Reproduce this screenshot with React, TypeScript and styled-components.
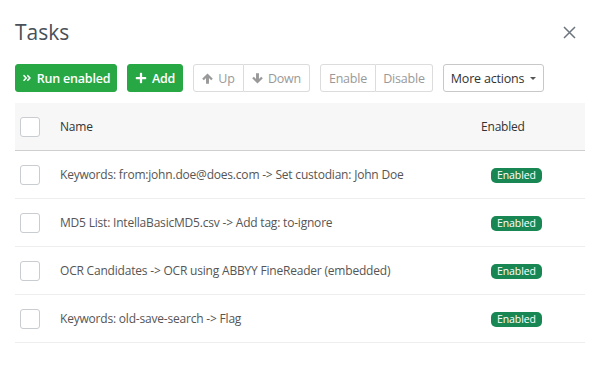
import styled, { createGlobalStyle } from "styled-components";
import { FaAngleDoubleRight, FaPlus } from "react-icons/fa";

const GlobalStyle = createGlobalStyle`
  body {
    margin: 0;
    background: #fff;
    font-family: "Open Sans", "Noto Sans", sans-serif;
    color: #333;
  }
`;

const Dialog = styled.div`
  width: 597px;
  height: 392px;
  box-sizing: border-box;
  padding: 14px 12px 0 15px;
`;

const TitleBar = styled.div`
  display: flex;
  align-items: center;
  justify-content: space-between;
  height: 36px;
`;

const Title = styled.h1`
  margin: 0;
  font-size: 21px;
  font-weight: 400;
  color: #495057;
`;

const Close = styled.button`
  border: 0;
  background: none;
  padding: 0;
  margin-right: 8px;
  width: 16px;
  height: 16px;
  display: flex;
  align-items: center;
  justify-content: center;
  color: #6c757d;
`;

const Toolbar = styled.div`
  display: flex;
  align-items: center;
  gap: 10px;
  margin-top: 14px;
`;

const Btn = styled.button<{ $variant?: "success" | "outline" | "disabled"; $w: number }>`
  width: ${(p) => p.$w}px;
  height: 28px;
  box-sizing: border-box;
  display: flex;
  align-items: center;
  justify-content: center;
  gap: 5px;
  padding: 0;
  white-space: nowrap;
  font-family: inherit;
  font-size: 12.5px;
  letter-spacing: -0.2px;
  border-radius: 3px;
  border: 1px solid
    ${(p) =>
      p.$variant === "success" ? "#28a745" : p.$variant === "outline" ? "#c8c8c8" : "#dcdcdc"};
  background: ${(p) => (p.$variant === "success" ? "#28a745" : "#fff")};
  color: ${(p) =>
    p.$variant === "success" ? "#fff" : p.$variant === "outline" ? "#333" : "#999"};
  font-weight: ${(p) => (p.$variant === "success" ? 600 : 400)};
`;

const Group = styled.div`
  display: flex;
  ${Btn} {
    border-radius: 0;
  }
  ${Btn}:first-child {
    border-radius: 3px 0 0 3px;
  }
  ${Btn}:last-child {
    border-radius: 0 3px 3px 0;
    border-left: 0;
  }
`;

const Caret = styled.span`
  display: inline-block;
  border-left: 3px solid transparent;
  border-right: 3px solid transparent;
  border-top: 3px solid #555;
  margin-left: 1px;
`;

const Table = styled.div`
  margin-top: 11px;
  width: 570px;
  font-size: 12px;
  letter-spacing: -0.2px;
`;

const Row = styled.div<{ $head?: boolean }>`
  display: grid;
  grid-template-columns: 45px 1fr 110px;
  align-items: center;
  height: 47px;
  white-space: nowrap;
  background: ${(p) => (p.$head ? "#f7f7f7" : "#fff")};
  border-bottom: 1px solid ${(p) => (p.$head ? "#cfcfcf" : "#eeeeee")};
  color: ${(p) => (p.$head ? "#333" : "#555")};
`;

const Check = styled.span`
  width: 18px;
  height: 18px;
  margin-left: 5px;
  border: 1px solid #c9ccd0;
  border-radius: 3px;
  background: #fff;
`;

const EnabledHead = styled.div`
  padding-left: 6px;
  color: #333;
`;

const BadgeCell = styled.div`
  padding-left: 16px;
`;

const Badge = styled.span`
  display: inline-block;
  background: #198754;
  color: #fff;
  font-size: 10.5px;
  letter-spacing: -0.1px;
  line-height: 15px;
  padding: 0 6px;
  border-radius: 5px;
`;

// solid arrow, pointing up; flipped for down
const Arrow = ({ down }: { down?: boolean }) => (
  <svg
    width="11"
    height="11"
    viewBox="0 0 12 12"
    style={down ? { transform: "rotate(180deg)" } : undefined}
  >
    <path
      d="M6 0.5 L11.8 6.2 L10 7.9 L7.6 5.5 V11.8 H4.4 V5.5 L2 7.9 L0.2 6.2 Z"
      fill="currentColor"
    />
  </svg>
);

const tasks = [
  "Keywords: from:john.doe@does.com -> Set custodian: John Doe",
  "MD5 List: IntellaBasicMD5.csv -> Add tag: to-ignore",
  "OCR Candidates -> OCR using ABBYY FineReader (embedded)",
  "Keywords: old-save-search -> Flag",
];

export default function App() {
  return (
    <>
      <GlobalStyle />
      <Dialog>
        <TitleBar>
          <Title>Tasks</Title>
          <Close aria-label="close">
            <svg width="13" height="13" viewBox="0 0 13 13">
              <path d="M1 1L12 12M12 1L1 12" stroke="currentColor" strokeWidth="1.5" />
            </svg>
          </Close>
        </TitleBar>
        <Toolbar>
          <Btn $variant="success" $w={102}>
            <FaAngleDoubleRight size={10} /> Run enabled
          </Btn>
          <Btn $variant="success" $w={56}>
            <FaPlus size={12} /> Add
          </Btn>
          <Group>
            <Btn $variant="disabled" $w={51}>
              <Arrow /> Up
            </Btn>
            <Btn $variant="disabled" $w={66}>
              <Arrow down /> Down
            </Btn>
          </Group>
          <Group>
            <Btn $variant="disabled" $w={56}>Enable</Btn>
            <Btn $variant="disabled" $w={57}>Disable</Btn>
          </Group>
          <Btn $variant="outline" $w={101}>
            More actions <Caret />
          </Btn>
        </Toolbar>
        <Table>
          <Row $head>
            <Check />
            <div>Name</div>
            <EnabledHead>Enabled</EnabledHead>
          </Row>
          {tasks.map((t) => (
            <Row key={t}>
              <Check />
              <div>{t}</div>
              <BadgeCell>
                <Badge>Enabled</Badge>
              </BadgeCell>
            </Row>
          ))}
        </Table>
      </Dialog>
    </>
  );
}
